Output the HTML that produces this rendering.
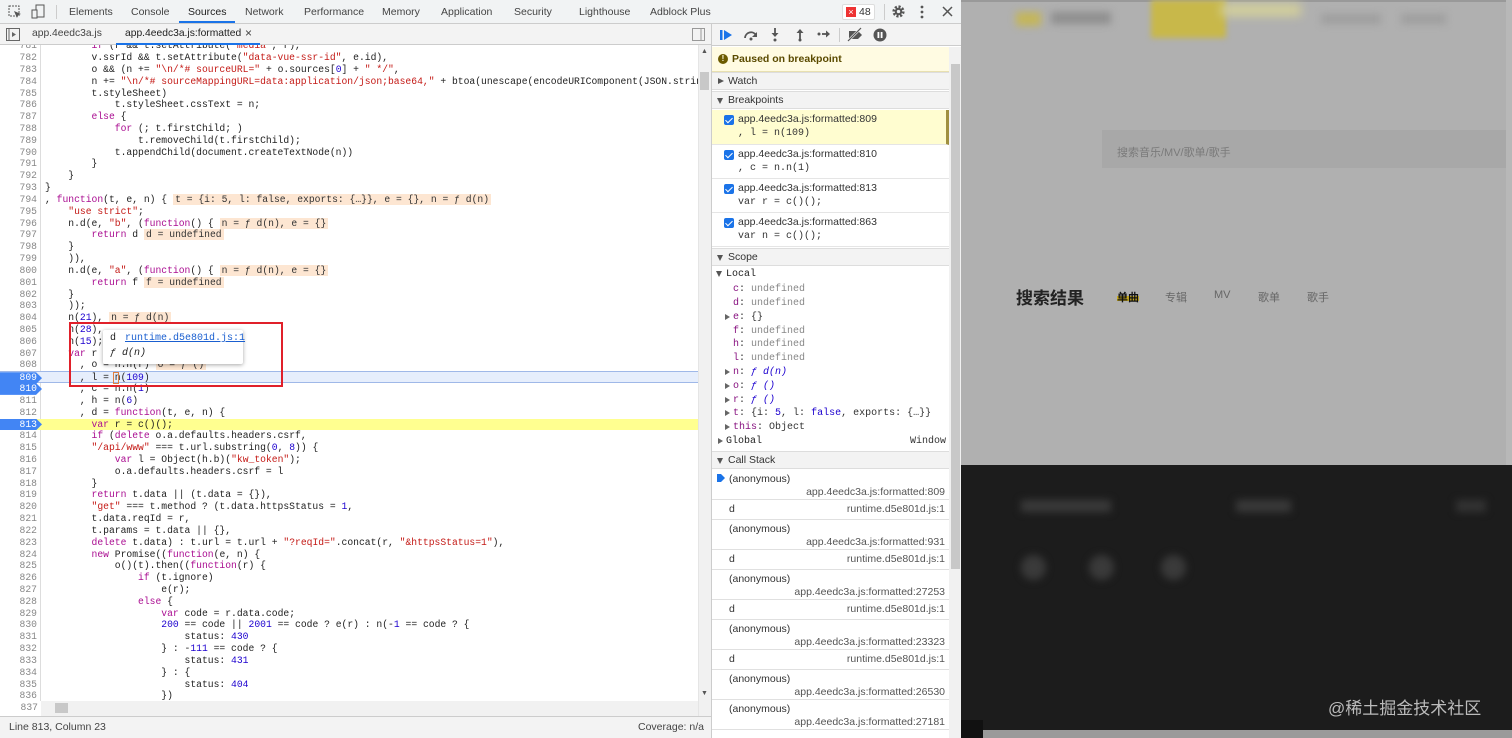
<!DOCTYPE html>
<html><head><meta charset="utf-8">
<style>
*{box-sizing:border-box;margin:0;padding:0}
html,body{width:1512px;height:738px;overflow:hidden}
body{position:relative;background:#fff;font-family:"Liberation Sans","Noto Sans CJK SC",sans-serif;font-size:10.5px;color:#333}
.abs{position:absolute}
.top{left:0;top:0;width:961px;height:24px;background:#f1f3f4;border-bottom:1px solid #ccc}
.tab{position:absolute;top:6px;color:#444;font-size:10.5px}
.files{left:0;top:24px;width:711px;height:21px;background:#f3f3f3;border-bottom:1px solid #ccc}
.code{left:0;top:45px;width:698px;height:656px;overflow:hidden;background:#fff}
.gut{position:absolute;left:0;top:0;width:41px;height:656px;border-right:1px solid #ddd;background:#fff}
.ln{position:absolute;left:0;width:698px;height:11.82px;font-family:"Liberation Mono",monospace;font-size:9.7px;line-height:11.82px;white-space:pre;color:#222}
.num{position:absolute;left:0;width:37px;text-align:right;color:#888}
.txt{position:absolute;left:45px}
.k{color:#aa0d91}.s{color:#c41a16}.n{color:#1c00cf}
.iv{background:#fde6d2;color:#333;padding:0 2px;margin-left:6px}
.bp{position:absolute;left:0;top:0;width:42px;height:11.82px;background:#4285f4;clip-path:polygon(0 0,36px 0,42px 50%,36px 100%,0 100%)}
.rp{left:711px;top:24px;width:250px;height:714px;background:#fff;border-left:1px solid #ccc;overflow:hidden}
.sh{position:absolute;left:0;width:237px;height:18px;background:#f3f3f3;border-top:1px solid #ddd;border-bottom:1px solid #ddd;padding-left:16px;line-height:17px;color:#333}
.sh:before{content:"";position:absolute;left:5px;top:6px;border-left:3.5px solid transparent;border-right:3.5px solid transparent;border-top:6px solid #555}
.sh.c:before{left:6px;top:5px;border-top:3.5px solid transparent;border-bottom:3.5px solid transparent;border-left:6px solid #555;border-right:none}
.bpi{position:absolute;left:0;width:237px;border-bottom:1px solid #e5e5e5;padding:3px 0 0 26px;line-height:13px}
.cb{position:absolute;left:12px;top:5px;width:10px;height:10px;background:#1a73e8;border-radius:2px}
.cb:after{content:"";position:absolute;left:3px;top:1px;width:3px;height:6px;border:solid #fff;border-width:0 1.5px 1.5px 0;transform:rotate(45deg)}
.mono{font-family:"Liberation Mono",monospace;font-size:10px}
.sc{position:absolute;font-family:"Liberation Mono",monospace;font-size:10px;line-height:13px}
.pk{color:#881280}.ud{color:#888}.fn{color:#1c00cf;font-style:italic}
.tri{position:absolute;left:-8px;top:3px;border-top:3.5px solid transparent;border-bottom:3.5px solid transparent;border-left:5px solid #666}
.cs{position:absolute;left:0;width:237px;border-bottom:1px solid #e0e0e0;color:#333}
.cs .a{position:absolute;left:17px;top:3px}
.cs .f{position:absolute;right:4px;color:#555}
.page{left:961px;top:0;width:551px;height:738px;background:#b0b0b0;overflow:hidden}
</style></head><body>

<div class="abs top">
 <svg class="abs" style="left:8px;top:5px" width="14" height="14"><rect x="1" y="1" width="10" height="10" fill="none" stroke="#555" stroke-dasharray="2 1"/><path d="M6 6l7 3-3 1-1 3z" fill="#555"/></svg>
 <svg class="abs" style="left:31px;top:4px" width="14" height="15"><rect x="5" y="1" width="8" height="12" fill="none" stroke="#555"/><rect x="1" y="6" width="5" height="8" fill="#f1f3f4" stroke="#555"/></svg>
 <div class="abs" style="left:56px;top:5px;width:1px;height:14px;background:#ccc"></div>
 <span class="tab" style="left:69px">Elements</span>
 <span class="tab" style="left:131px">Console</span>
 <span class="tab" style="left:188px;color:#222">Sources</span>
 <div class="abs" style="left:179px;top:21px;width:56px;height:2px;background:#1a73e8"></div>
 <span class="tab" style="left:245px">Network</span>
 <span class="tab" style="left:304px">Performance</span>
 <span class="tab" style="left:382px">Memory</span>
 <span class="tab" style="left:441px">Application</span>
 <span class="tab" style="left:514px">Security</span>
 <span class="tab" style="left:579px">Lighthouse</span>
 <span class="tab" style="left:650px">Adblock Plus</span>
 <div class="abs" style="left:842px;top:4px;width:33px;height:16px;border:1px solid #ddd;border-radius:2px;background:#fff"></div>
 <div class="abs" style="left:846px;top:7px;width:10px;height:10px;background:#e33;color:#fff;font-size:9px;line-height:10px;text-align:center">×</div>
 <span class="abs" style="left:859px;top:6px;color:#333">48</span>
 <div class="abs" style="left:884px;top:4px;width:1px;height:16px;background:#ccc"></div>
 <svg class="abs" style="left:891px;top:4px" width="15" height="15" viewBox="0 0 16 16"><circle cx="8" cy="8" r="5" fill="none" stroke="#555" stroke-width="3" stroke-dasharray="2.2 1.7"/><circle cx="8" cy="8" r="4" fill="#555"/><circle cx="8" cy="8" r="1.8" fill="#f1f3f4"/></svg>
 <svg class="abs" style="left:920px;top:5px" width="4" height="14"><circle cx="2" cy="2" r="1.4" fill="#555"/><circle cx="2" cy="7" r="1.4" fill="#555"/><circle cx="2" cy="12" r="1.4" fill="#555"/></svg>
 <svg class="abs" style="left:942px;top:6px" width="11" height="11"><path d="M1 1L10 10M10 1L1 10" stroke="#555" stroke-width="1.5"/></svg>
</div>

<div class="abs files">
 <svg class="abs" style="left:6px;top:4px" width="14" height="13"><rect x="0.5" y="0.5" width="13" height="12" fill="none" stroke="#666"/><path d="M3 1v11" stroke="#666"/><path d="M6 4l4 2.5-4 2.5z" fill="#666"/></svg>
 <span class="abs" style="left:32px;top:4px;color:#444;font-size:10.3px">app.4eedc3a.js</span>
 <span class="abs" style="left:125px;top:4px;color:#222;font-size:10.3px">app.4eedc3a.js:formatted</span>
 <span class="abs" style="left:245px;top:2px;color:#444;font-size:12px">×</span>
 <div class="abs" style="left:116px;top:19px;width:144px;height:2px;background:#1a73e8"></div>
 <svg class="abs" style="left:692px;top:4px" width="13" height="13"><rect x="0.5" y="0.5" width="12" height="12" fill="none" stroke="#999"/><path d="M9 1v11" stroke="#999"/></svg>
</div>

<div class="abs code">
<div class="gut"></div>
<div id="lines"></div>
</div>
<div class="abs" style="left:698px;top:45px;width:13px;height:671px;background:#f1f1f1;border-left:1px solid #e5e5e5"></div>
<div class="abs" style="left:700px;top:72px;width:9px;height:18px;background:#c8c8c8"></div>
<div class="abs" style="left:701px;top:48px;font-size:7px;color:#555">▲</div>
<div class="abs" style="left:701px;top:690px;font-size:7px;color:#555">▼</div>
<div class="abs" style="left:41px;top:701px;width:657px;height:15px;background:#f1f1f1"></div>
<div class="abs" style="left:55px;top:703px;width:13px;height:10px;background:#c8c8c8"></div>
<div class="abs" style="left:8px;top:702px;width:30px;text-align:right;color:#888;font-family:'Liberation Mono',monospace;font-size:9.7px">837</div>
<div class="abs" style="left:0;top:716px;width:711px;height:22px;background:#f3f3f3;border-top:1px solid #ccc"></div>
<span class="abs" style="left:9px;top:721px;color:#444">Line 813, Column 23</span>
<span class="abs" style="left:638px;top:721px;color:#444">Coverage: n/a</span>

<div class="abs" style="left:103px;top:330px;width:140px;height:34px;background:#fff;box-shadow:0 1px 4px rgba(0,0,0,.35);border-radius:2px"></div>
<span class="abs" style="left:110px;top:333px;font-family:'Liberation Mono',monospace;font-size:10px;color:#222">d</span>
<span class="abs" style="left:125px;top:333px;font-family:'Liberation Mono',monospace;font-size:10px;color:#1a5fd0;text-decoration:underline">runtime.d5e801d.js:1</span>
<span class="abs" style="left:110px;top:348px;font-family:'Liberation Mono',monospace;font-size:10px;color:#222;font-style:italic">ƒ d(n)</span>
<div class="abs" style="left:69px;top:322px;width:214px;height:65px;border:2.5px solid #e0202a"></div>
<div class="abs" style="left:113px;top:372px;width:6px;height:12px;border:1px solid #e08040"></div>

<div class="abs rp">
 <div class="abs" style="left:0;top:0;width:250px;height:22px;border-bottom:1px solid #ccc;background:#f3f3f3"></div>
 <svg class="abs" style="left:7px;top:4px" width="16" height="14"><rect x="1" y="2" width="2.5" height="10" fill="#1a73e8"/><path d="M5 2l8 5-8 5z" fill="#1a73e8"/></svg>
 <svg class="abs" style="left:31px;top:4px" width="16" height="14"><path d="M2 10a6 6 0 0 1 11-3" fill="none" stroke="#555" stroke-width="1.8"/><path d="M14 4v5h-5z" fill="#555"/><circle cx="8" cy="11" r="1.5" fill="#555"/></svg>
 <svg class="abs" style="left:58px;top:3px" width="10" height="15"><path d="M5 1v8" stroke="#555" stroke-width="1.8"/><path d="M1.5 6l3.5 4 3.5-4z" fill="#555"/><circle cx="5" cy="13" r="1.5" fill="#555"/></svg>
 <svg class="abs" style="left:83px;top:3px" width="10" height="15"><path d="M5 5v8" stroke="#555" stroke-width="1.8"/><path d="M1.5 6l3.5-4 3.5 4z" fill="#555"/><circle cx="5" cy="13" r="1.5" fill="#555"/></svg>
 <svg class="abs" style="left:105px;top:5px" width="15" height="10"><circle cx="2" cy="5" r="1.5" fill="#555"/><path d="M5 5h5" stroke="#555" stroke-width="1.8"/><path d="M9 1.5l4 3.5-4 3.5z" fill="#555"/></svg>
 <div class="abs" style="left:127px;top:4px;width:1px;height:14px;background:#ccc"></div>
 <svg class="abs" style="left:134px;top:3px" width="18" height="15"><path d="M3 4h9l4 4-4 4H3z" fill="#555"/><path d="M2 14L15 1" stroke="#f3f3f3" stroke-width="2.5"/><path d="M2 14L15 1" stroke="#555" stroke-width="1.2"/></svg>
 <svg class="abs" style="left:161px;top:4px" width="14" height="14"><circle cx="7" cy="7" r="6.5" fill="#555"/><rect x="4.5" y="4" width="1.8" height="6" fill="#fff"/><rect x="7.7" y="4" width="1.8" height="6" fill="#fff"/></svg>

 <div class="abs" style="left:0;top:23px;width:237px;height:25px;background:#fffbe2;border-bottom:1px solid #e8e0b0"></div>
 <div class="abs" style="left:6px;top:30px;width:10px;height:10px;border-radius:50%;background:#6b5a00;color:#fffbe2;font-size:8px;font-weight:bold;line-height:10px;text-align:center">!</div>
 <span class="abs" style="left:20px;top:29px;font-weight:bold;color:#5a4a00">Paused on breakpoint</span>

 <div class="sh c" style="top:48px">Watch</div>
 <div class="sh" style="top:67px">Breakpoints</div>
 <div class="bpi" style="top:86px;height:35px;background:#fffdd0;border-right:3px solid #a09040"><div class="cb"></div>app.4eedc3a.js:formatted:809<br><span class="mono">, l = n(109)</span></div>
 <div class="bpi" style="top:121px;height:34px"><div class="cb"></div>app.4eedc3a.js:formatted:810<br><span class="mono">, c = n.n(1)</span></div>
 <div class="bpi" style="top:155px;height:34px"><div class="cb"></div>app.4eedc3a.js:formatted:813<br><span class="mono">var r = c()();</span></div>
 <div class="bpi" style="top:189px;height:34px"><div class="cb"></div>app.4eedc3a.js:formatted:863<br><span class="mono">var n = c()();</span></div>
 <div class="sh" style="top:224px">Scope</div>
 <div class="abs" style="left:4px;top:247px;border-left:3.5px solid transparent;border-right:3.5px solid transparent;border-top:6px solid #555"></div>
 <div class="sc" style="left:14px;top:244px;color:#222">Local</div>
 <div class="sc" style="left:21px;top:259px"><span class="pk">c</span>: <span class="ud">undefined</span></div>
 <div class="sc" style="left:21px;top:273px"><span class="pk">d</span>: <span class="ud">undefined</span></div>
 <div class="sc" style="left:21px;top:287px"><i class="tri"></i><span class="pk">e</span>: {}</div>
 <div class="sc" style="left:21px;top:301px"><span class="pk">f</span>: <span class="ud">undefined</span></div>
 <div class="sc" style="left:21px;top:314px"><span class="pk">h</span>: <span class="ud">undefined</span></div>
 <div class="sc" style="left:21px;top:328px"><span class="pk">l</span>: <span class="ud">undefined</span></div>
 <div class="sc" style="left:21px;top:342px"><i class="tri"></i><span class="pk">n</span>: <span class="fn">ƒ d(n)</span></div>
 <div class="sc" style="left:21px;top:356px"><i class="tri"></i><span class="pk">o</span>: <span class="fn">ƒ ()</span></div>
 <div class="sc" style="left:21px;top:370px"><i class="tri"></i><span class="pk">r</span>: <span class="fn">ƒ ()</span></div>
 <div class="sc" style="left:21px;top:383px"><i class="tri"></i><span class="pk">t</span>: {i: <span class="n">5</span>, l: <span class="n">false</span>, exports: {…}}</div>
 <div class="sc" style="left:21px;top:397px"><i class="tri"></i><span class="pk">this</span>: Object</div>
 <div class="sc" style="left:14px;top:411px;color:#222"><i class="tri" style="left:-8px"></i>Global</div>
 <div class="sc" style="left:198px;top:411px;color:#333">Window</div>
 <div class="sh" style="top:427px">Call Stack</div>
 <div class="cs" style="top:446px;height:30px"><svg class="abs" style="left:5px;top:4px" width="8" height="8"><path d="M0 0h4l4 4-4 4H0z" fill="#1a73e8"/></svg><span class="a">(anonymous)</span><span class="f" style="top:16px">app.4eedc3a.js:formatted:809</span></div>
 <div class="cs" style="top:476px;height:20px"><span class="a">d</span><span class="f" style="top:3px">runtime.d5e801d.js:1</span></div>
 <div class="cs" style="top:496px;height:30px"><span class="a">(anonymous)</span><span class="f" style="top:16px">app.4eedc3a.js:formatted:931</span></div>
 <div class="cs" style="top:526px;height:20px"><span class="a">d</span><span class="f" style="top:3px">runtime.d5e801d.js:1</span></div>
 <div class="cs" style="top:546px;height:30px"><span class="a">(anonymous)</span><span class="f" style="top:16px">app.4eedc3a.js:formatted:27253</span></div>
 <div class="cs" style="top:576px;height:20px"><span class="a">d</span><span class="f" style="top:3px">runtime.d5e801d.js:1</span></div>
 <div class="cs" style="top:596px;height:30px"><span class="a">(anonymous)</span><span class="f" style="top:16px">app.4eedc3a.js:formatted:23323</span></div>
 <div class="cs" style="top:626px;height:20px"><span class="a">d</span><span class="f" style="top:3px">runtime.d5e801d.js:1</span></div>
 <div class="cs" style="top:646px;height:30px"><span class="a">(anonymous)</span><span class="f" style="top:16px">app.4eedc3a.js:formatted:26530</span></div>
 <div class="cs" style="top:676px;height:30px"><span class="a">(anonymous)</span><span class="f" style="top:16px">app.4eedc3a.js:formatted:27181</span></div>
 <div class="cs" style="top:706px;height:20px"></div>
 <div class="abs" style="left:237px;top:23px;width:12px;height:691px;background:#f1f1f1"></div>
 <div class="abs" style="left:239px;top:40px;width:9px;height:505px;background:#c8c8c8"></div>
</div>

<div class="abs page">
 <div class="abs" style="left:0;top:0;width:551px;height:2px;background:#999"></div>
 <div class="abs" style="left:55px;top:12px;width:25px;height:14px;background:#c4b65a;filter:blur(4px)"></div>
 <div class="abs" style="left:90px;top:12px;width:60px;height:12px;background:#8e8e8e;filter:blur(4px)"></div>
 <div class="abs" style="left:190px;top:0;width:75px;height:38px;background:#c8b84a;filter:blur(3px)"></div>
 <div class="abs" style="left:260px;top:4px;width:80px;height:12px;background:#d4d09a;filter:blur(5px)"></div>
 <div class="abs" style="left:360px;top:14px;width:60px;height:10px;background:#9e9e9e;filter:blur(4px)"></div>
 <div class="abs" style="left:440px;top:14px;width:45px;height:10px;background:#9e9e9e;filter:blur(4px)"></div>
 <div class="abs" style="left:141px;top:130px;width:410px;height:38px;background:#a8a8a8"></div>
 <span class="abs" style="left:156px;top:144px;font-size:11px;color:#7a7a7a">搜索音乐/MV/歌单/歌手</span>
 <span class="abs" style="left:55px;top:284px;font-size:17px;font-weight:bold;color:#222">搜索结果</span>
 <div class="abs" style="left:156px;top:296px;width:22px;height:5px;background:#c8aa20"></div>
 <span class="abs" style="left:156px;top:289px;font-size:11px;font-weight:bold;color:#111">单曲</span>
 <span class="abs" style="left:204px;top:289px;font-size:11px;color:#666">专辑</span>
 <span class="abs" style="left:253px;top:289px;font-size:11px;color:#666">MV</span>
 <span class="abs" style="left:297px;top:289px;font-size:11px;color:#666">歌单</span>
 <span class="abs" style="left:346px;top:289px;font-size:11px;color:#666">歌手</span>
 <div class="abs" style="left:545px;top:0;width:6px;height:465px;background:#b8b8b8"></div>
 <div class="abs" style="left:0;top:465px;width:551px;height:273px;background:#1c1c1c"></div>
 <div class="abs" style="left:60px;top:500px;width:90px;height:12px;background:#3a3a3a;filter:blur(4px)"></div>
 <div class="abs" style="left:275px;top:500px;width:55px;height:12px;background:#3a3a3a;filter:blur(4px)"></div>
 <div class="abs" style="left:495px;top:500px;width:30px;height:12px;background:#333;filter:blur(4px)"></div>
 <div class="abs" style="left:60px;top:555px;width:25px;height:25px;border-radius:50%;background:#3a3a3a;filter:blur(4px)"></div>
 <div class="abs" style="left:128px;top:555px;width:25px;height:25px;border-radius:50%;background:#3a3a3a;filter:blur(4px)"></div>
 <div class="abs" style="left:200px;top:555px;width:25px;height:25px;border-radius:50%;background:#3a3a3a;filter:blur(4px)"></div>
 <div class="abs" style="left:0;top:720px;width:22px;height:18px;background:#111"></div>
 <div class="abs" style="left:22px;top:730px;width:529px;height:8px;background:#9a9a9a"></div>
 <span class="abs" style="left:367px;top:694px;font-size:17px;color:#bbb">@稀土掘金技术社区</span>
</div>

<script>
var L=[
[781,'        <span class="k">if</span> (r && t.setAttribute(<span class="s">"media"</span>, r),'],
[782,'        v.ssrId && t.setAttribute(<span class="s">"data-vue-ssr-id"</span>, e.id),'],
[783,'        o && (n += <span class="s">"\\n/*# sourceURL="</span> + o.sources[<span class="n">0</span>] + <span class="s">" */"</span>,'],
[784,'        n += <span class="s">"\\n/*# sourceMappingURL=data:application/json;base64,"</span> + btoa(unescape(encodeURIComponent(JSON.stringify(o))))'],
[785,'        t.styleSheet)'],
[786,'            t.styleSheet.cssText = n;'],
[787,'        <span class="k">else</span> {'],
[788,'            <span class="k">for</span> (; t.firstChild; )'],
[789,'                t.removeChild(t.firstChild);'],
[790,'            t.appendChild(document.createTextNode(n))'],
[791,'        }'],
[792,'    }'],
[793,'}'],
[794,', <span class="k">function</span>(t, e, n) {<span class="iv">t = {i: 5, l: false, exports: {…}}, e = {}, n = ƒ d(n)</span>'],
[795,'    <span class="s">"use strict"</span>;'],
[796,'    n.d(e, <span class="s">"b"</span>, (<span class="k">function</span>() {<span class="iv">n = ƒ d(n), e = {}</span>'],
[797,'        <span class="k">return</span> d<span class="iv">d = undefined</span>'],
[798,'    }'],
[799,'    )),'],
[800,'    n.d(e, <span class="s">"a"</span>, (<span class="k">function</span>() {<span class="iv">n = ƒ d(n), e = {}</span>'],
[801,'        <span class="k">return</span> f<span class="iv">f = undefined</span>'],
[802,'    }'],
[803,'    ));'],
[804,'    n(<span class="n">21</span>),<span class="iv">n = ƒ d(n)</span>'],
[805,'    n(<span class="n">28</span>),'],
[806,'    n(<span class="n">15</span>);'],
[807,'    <span class="k">var</span> r = n(<span class="n">5</span>)'],
[808,'      , o = n.n(r)<span class="iv">o = ƒ ()</span>'],
[809,'      , l = n(<span class="n">109</span>)'],
[810,'      , c = n.n(<span class="n">1</span>)'],
[811,'      , h = n(<span class="n">6</span>)'],
[812,'      , d = <span class="k">function</span>(t, e, n) {'],
[813,'        <span class="k">var</span> r = c()();'],
[814,'        <span class="k">if</span> (<span class="k">delete</span> o.a.defaults.headers.csrf,'],
[815,'        <span class="s">"/api/www"</span> === t.url.substring(<span class="n">0</span>, <span class="n">8</span>)) {'],
[816,'            <span class="k">var</span> l = Object(h.b)(<span class="s">"kw_token"</span>);'],
[817,'            o.a.defaults.headers.csrf = l'],
[818,'        }'],
[819,'        <span class="k">return</span> t.data || (t.data = {}),'],
[820,'        <span class="s">"get"</span> === t.method ? (t.data.httpsStatus = <span class="n">1</span>,'],
[821,'        t.data.reqId = r,'],
[822,'        t.params = t.data || {},'],
[823,'        <span class="k">delete</span> t.data) : t.url = t.url + <span class="s">"?reqId="</span>.concat(r, <span class="s">"&amp;httpsStatus=1"</span>),'],
[824,'        <span class="k">new</span> Promise((<span class="k">function</span>(e, n) {'],
[825,'            o()(t).then((<span class="k">function</span>(r) {'],
[826,'                <span class="k">if</span> (t.ignore)'],
[827,'                    e(r);'],
[828,'                <span class="k">else</span> {'],
[829,'                    <span class="k">var</span> code = r.data.code;'],
[830,'                    <span class="n">200</span> == code || <span class="n">2001</span> == code ? e(r) : n(-<span class="n">1</span> == code ? {'],
[831,'                        status: <span class="n">430</span>'],
[832,'                    } : -<span class="n">111</span> == code ? {'],
[833,'                        status: <span class="n">431</span>'],
[834,'                    } : {'],
[835,'                        status: <span class="n">404</span>'],
[836,'                    })']
];
var h='';
L.forEach(function(a){
 var i=a[0],top=(52.1-45)+(i-782)*11.82,bg='',bp='',nc='';
 if(i==809)bg='background:#e6eefc;border-top:1px solid #9fb8e8;border-bottom:1px solid #9fb8e8;';
 if(i==813)bg='background:#ffff90;';
 if(i==809||i==810||i==813){bp='<div class="bp"></div>';nc='color:#fff;';}
 h+='<div class="ln" style="top:'+top+'px;'+bg+'">'+bp+'<span class="num" style="'+nc+'">'+i+'</span><span class="txt">'+a[1]+'</span></div>';
});
document.getElementById('lines').innerHTML=h;
</script>
</body></html>
